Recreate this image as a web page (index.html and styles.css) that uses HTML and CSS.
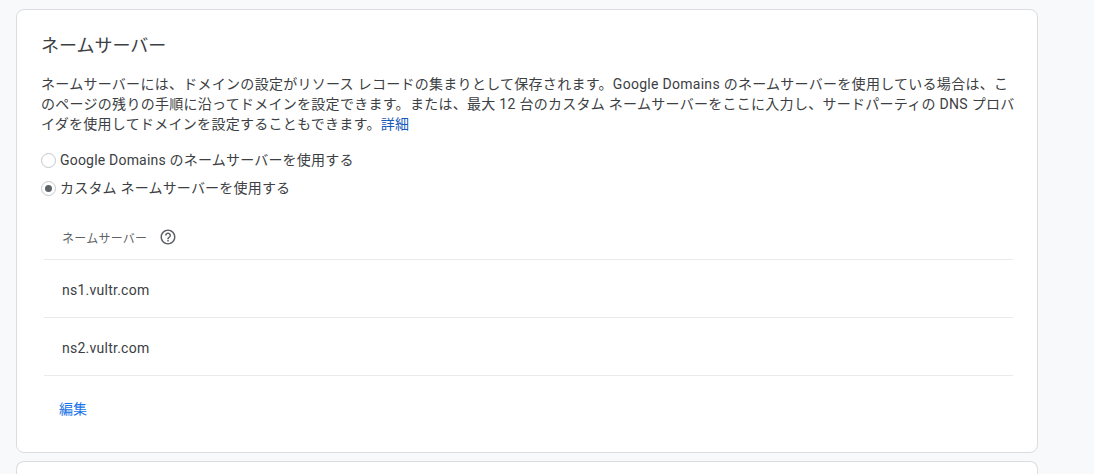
FILE: index.html
```html
<!DOCTYPE html>
<html lang="ja">
<head>
<meta charset="utf-8">
<title>ネームサーバー</title>
<link rel="stylesheet" href="styles.css">
</head>
<body>
<div class="page">
  <section class="card">
    <h2 class="title">ネームサーバー</h2>
    <p class="desc">ネームサーバーには、ドメインの設定がリソース レコードの集まりとして保存されます。Google Domains のネームサーバーを使用している場合は、このページの残りの手順に沿ってドメインを設定できます。または、最大 12 台のカスタム ネームサーバーをここに入力し、サードパーティの DNS プロバイダを使用してドメインを設定することもできます。<a class="link" href="#">詳細</a></p>
    <div class="radios">
      <label class="radio"><span class="dot"></span><span>Google Domains のネームサーバーを使用する</span></label>
      <label class="radio"><span class="dot on"></span><span>カスタム ネームサーバーを使用する</span></label>
    </div>
    <div class="table">
      <div class="head">
        <span>ネームサーバー</span>
        <svg class="help" width="18" height="18" viewBox="0 0 24 24"><path fill="#5f6368" d="M11 18h2v-2h-2v2zm1-16C6.48 2 2 6.48 2 12s4.48 10 10 10 10-4.48 10-10S17.520 2 12 2zm0 18c-4.410 0-8-3.590-8-8s3.590-8 8-8 8 3.590 8 8-3.590 8-8 8zm0-14c-2.210 0-4 1.790-4 4h2c0-1.100.9-2 2-2s2 .9 2 2c0 2-3 1.750-3 5h2c0-2.250 3-2.500 3-5 0-2.210-1.790-4-4-4z"/></svg>
      </div>
      <div class="row">ns1.vultr.com</div>
      <div class="row">ns2.vultr.com</div>
    </div>
    <a class="edit" href="#">編集</a>
  </section>
  <section class="card next"></section>
</div>
</body>
</html>
```
FILE: styles.css
```css
html, body { margin: 0; padding: 0; height: 100%; overflow: hidden; }
body {
  background: #f8f9fa;
  font-family: Roboto, "Noto Sans CJK JP", sans-serif;
  color: #3c4043;
}
.page { padding: 9px 56px 0 16px; display: flex; flex-direction: column; gap: 8px; height: 100%; box-sizing: border-box; overflow: hidden; }
.card {
  background: #fff;
  border: 1px solid #dadce0;
  border-radius: 8px;
  padding: 24px 20px 24px 24px;
  height: 444px;
  box-sizing: border-box;
  flex: none;
}
.next { height: 20px; padding: 0; border-bottom: 0; border-radius: 8px 8px 0 0; }
.title { margin: 0; font-size: 18px; font-weight: 400; line-height: 24px; }
.desc { margin: 16px 0 0; font-size: 14px; line-height: 20px; letter-spacing: .28px; }
.link { color: #185abc; text-decoration: none; }
.radios { margin-top: 16px; display: flex; flex-direction: column; gap: 8px; }
.radio { display: flex; align-items: center; gap: 4px; font-size: 14px; line-height: 20px; letter-spacing: .2px; }
.dot { width: 13px; height: 13px; border: 1px solid #c4c7cc; border-radius: 50%; position: relative; flex: none; }
.dot.on::after { content: ""; position: absolute; left: 3px; top: 3px; width: 7px; height: 7px; border-radius: 50%; background: #5f6368; }
.table { margin: 17px 0 0 3px; width: 969px; }
.head { display: flex; align-items: center; gap: 12px; height: 44px; padding-left: 18px; font-size: 12px; letter-spacing: .25px; color: #5f6368; border-bottom: 1px solid #e8eaed; }
.row { height: 58px; display: flex; align-items: center; padding: 2px 0 0 18px; box-sizing: border-box; font-size: 14px; letter-spacing: .25px; color: #3c4043; border-bottom: 1px solid #e8eaed; }
.edit { display: inline-block; margin: 23px 0 0 18px; font-size: 14px; line-height: 20px; color: #1a73e8; text-decoration: none; }
```
